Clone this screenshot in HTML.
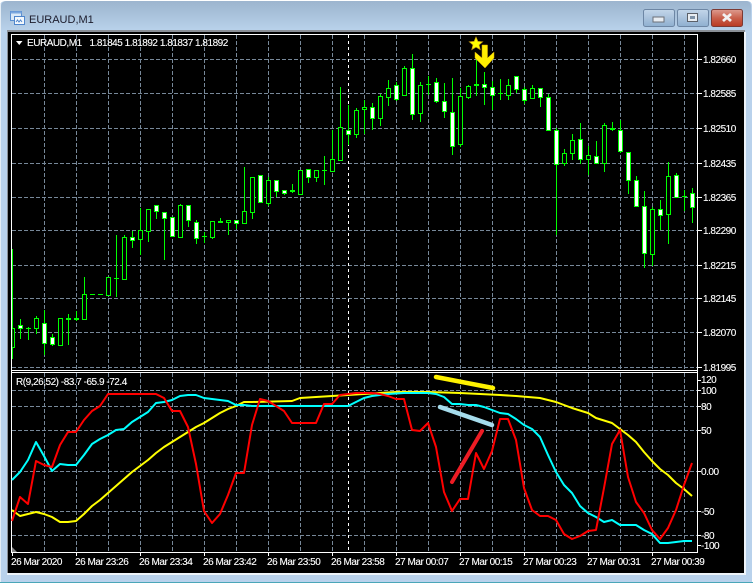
<!DOCTYPE html>
<html><head><meta charset="utf-8"><style>
html,body{margin:0;padding:0;background:#b9d2ec}
svg{display:block}
text{font-family:"Liberation Sans",sans-serif;font-size:10px;letter-spacing:-.47px;fill:#fff;stroke:#fff;stroke-width:.12px}
</style></head><body>
<svg width="753" height="583" viewBox="0 0 753 583" xmlns="http://www.w3.org/2000/svg">
<defs>
<linearGradient id="t" x1="0" y1="0" x2="0" y2="1"><stop offset="0" stop-color="#9cb4ce"/><stop offset="1" stop-color="#bad3ec"/></linearGradient>
<linearGradient id="b" x1="0" y1="0" x2="0" y2="1"><stop offset="0" stop-color="#c3d6ea"/><stop offset=".5" stop-color="#a9c2dc"/><stop offset="1" stop-color="#8fb0d0"/></linearGradient>
<linearGradient id="r" x1="0" y1="0" x2="0" y2="1"><stop offset="0" stop-color="#dd9c90"/><stop offset=".5" stop-color="#c9604c"/><stop offset="1" stop-color="#b93a22"/></linearGradient>
</defs>
<rect width="753" height="583" fill="#fff"/>
<path d="M0 583V6Q0 1 6 1H747Q752 1 752 6V583Z" fill="#b9d2ec"/>
<path d="M1 32V7Q1 1 7 1H746Q751 1 751 7V32Z" fill="url(#t)"/>
<rect x="0" y="582" width="753" height="1" fill="#4aa6b8"/>
<rect x="0" y="3" width="1" height="579" fill="#e4edf5"/>
<rect x="7" y="30" width="738" height="2" fill="#8a8f96"/>
<rect x="7" y="32" width="1" height="541" fill="#8a8f96"/>
<rect x="744" y="32" width="2" height="543" fill="#eef4fa"/>
<rect x="7" y="573" width="739" height="2" fill="#eef4fa"/>
<rect x="8" y="32" width="736" height="541" fill="#000"/>

<!-- title icon -->
<rect x="10.500" y="11.500" width="11" height="9" fill="#dbe9f7" stroke="#5b8fd0"/>
<rect x="10.500" y="11.500" width="11" height="2" fill="#7aa6de"/>
<rect x="14.500" y="16.500" width="10" height="8" fill="#f3f8fd" stroke="#4f86cc"/>
<path d="M16 22l1.500-2 1.500 2 1.500-2 1.500 2" fill="none" stroke="#4f86cc"/>
<text x="29" y="23" style="font-size:11px;letter-spacing:0;fill:#1c1c2c;stroke:none">EURAUD,M1</text>

<!-- window buttons -->
<rect x="643.500" y="9.500" width="31" height="17" rx="2" fill="url(#b)" stroke="#6d86a4"/>
<rect x="653" y="17" width="11" height="5" fill="#e8edf2" stroke="#6b7078"/>
<rect x="677.500" y="9.500" width="31" height="17" rx="2" fill="url(#b)" stroke="#6d86a4"/>
<rect x="687.500" y="13.500" width="10" height="8" fill="#e8edf2" stroke="#5b6068"/>
<rect x="690" y="16" width="5" height="3" fill="#7f93a8"/>
<rect x="711.500" y="9.500" width="31" height="17" rx="2" fill="url(#r)" stroke="#7c3a34"/>
<path d="M723 14l8 7m0-7l-8 7" stroke="#f2f2f2" stroke-width="2.800" fill="none"/>

<!-- grid -->
<path shape-rendering="crispEdges" fill="none" stroke="#778899" stroke-dasharray="4 2" d="M12 59.500H697M12 93.500H697M12 128.500H697M12 163.500H697M12 197.500H697M12 230.500H697M12 265.500H697M12 298.500H697M12 332.500H697M12 367.500H697M12 390.500H697M12 406.500H697M12 430.500H697M12 471.500H697M12 511.500H697M12 535.500H697"/>
<path shape-rendering="crispEdges" fill="none" stroke="#778899" stroke-dasharray="4 2" d="M44.500 35V370M76.500 35V370M108.500 35V370M140.500 35V370M172.500 35V370M204.500 35V370M236.500 35V370M268.500 35V370M300.500 35V370M332.500 35V370M364.500 35V370M396.500 35V370M428.500 35V370M460.500 35V370M492.500 35V370M524.500 35V370M556.500 35V370M588.500 35V370M620.500 35V370M652.500 35V370M684.500 35V370M44.500 373V552M76.500 373V552M108.500 373V552M140.500 373V552M172.500 373V552M204.500 373V552M236.500 373V552M268.500 373V552M300.500 373V552M332.500 373V552M364.500 373V552M396.500 373V552M428.500 373V552M460.500 373V552M492.500 373V552M524.500 373V552M556.500 373V552M588.500 373V552M620.500 373V552M652.500 373V552M684.500 373V552"/>
<path shape-rendering="crispEdges" fill="none" stroke="#fff" stroke-dasharray="3 3" d="M348.500 35V370M348.500 373V552"/>

<!-- frames -->
<path shape-rendering="crispEdges" fill="none" stroke="#fff" d="M11.500 34.500H697.500V552.500H11.500ZM11.500 370.500H697.500M11.500 372.500H697.500"/>
<path shape-rendering="crispEdges" fill="none" stroke="#fff" d="M698 59.500h4M698 93.500h4M698 128.500h4M698 163.500h4M698 197.500h4M698 230.500h4M698 265.500h4M698 298.500h4M698 332.500h4M698 367.500h4M698 380.500h3M698 390.500h3M698 406.500h3M698 430.500h3M698 471.500h3M698 511.500h3M698 535.500h3M698 545.500h3M12.500 553v3M76.500 553v3M140.500 553v3M204.500 553v3M268.500 553v3M332.500 553v3M396.500 553v3M460.500 553v3M524.500 553v3M588.500 553v3M652.500 553v3"/>

<!-- candle wicks -->
<path shape-rendering="crispEdges" fill="none" stroke="#00ff00" d="M12.500 249V359M20.500 319V339M28.500 327V340M36.500 316V334M44.500 310V355M52.500 334V346M68.500 314V345M76.500 311V321M84.500 277V320M116.500 235V297M124.500 235V280M132.500 231V248M140.500 208V255M148.500 209V242M156.500 205V219M164.500 212V260M180.500 204V238M188.500 205V227M196.500 220V244M204.500 232V243M212.500 221V239M220.500 218V223M228.500 220V235M236.500 220V229M244.500 167V224M252.500 177V219M268.500 177V206M276.500 180V197M284.500 190V195M292.500 184V193M308.500 169V183M316.500 170V182M324.500 156V185M332.500 130V172M340.500 87V161M348.500 105V145M356.500 108V138M364.500 100V134M372.500 103V130M380.500 94V126M388.500 80V106M396.500 82V101M404.500 66V96M412.500 54V120M420.500 82V122M428.500 76V95M436.500 78V103M444.500 83V118M452.500 78V155M460.500 88V147M468.500 85V99M476.500 60V96M484.500 72V105M492.500 81V110M500.500 79V100M508.500 79V100M516.500 76V93M524.500 87V104M532.500 85V99M540.500 88V107M548.500 94V131M556.500 128V235M564.500 149V166M572.500 134V160M580.500 123V164M588.500 146V175M596.500 141V164M604.500 123V172M612.500 122V131M620.500 120V153M628.500 152V194M636.500 176V207M644.500 191V268M652.500 207V266M660.500 200V230M668.500 162V244M676.500 173V198M684.500 190V211M692.500 188V223"/>
<!-- doji bars -->
<path shape-rendering="crispEdges" fill="none" stroke="#00ff00" d="M26 328.500h5M66 319.500h5M66 318.500h5M74 319.500h5M74 318.500h5M90 294.500h5M98 294.500h5M114 278.500h5M202 236.500h5M218 222.500h5M218 221.500h5M290 191.500h5M290 190.500h5M322 170.500h5M426 84.500h5M474 85.500h5M474 84.500h5M498 93.500h5M610 129.500h5M610 128.500h5M682 196.500h5"/>
<!-- hollow bodies -->
<path shape-rendering="crispEdges" fill="#000" stroke="#00ff00" d="M12.500 328.500h2V347.500h-2M34.500 318.500h4V328.500h-4zM58.500 318.500h4V345.500h-4zM82.500 294.500h4V319.500h-4zM106.500 277.500h4V295.500h-4zM122.500 237.500h4V279.500h-4zM138.500 230.500h4V239.500h-4zM146.500 209.500h4V231.500h-4zM178.500 205.500h4V237.500h-4zM210.500 221.500h4V237.500h-4zM226.500 220.500h4V222.500h-4zM242.500 211.500h4V223.500h-4zM250.500 177.500h4V212.500h-4zM266.500 180.500h4V203.500h-4zM298.500 170.500h4V194.500h-4zM314.500 170.500h4V177.500h-4zM330.500 159.500h4V171.500h-4zM338.500 127.500h4V160.500h-4zM354.500 110.500h4V134.500h-4zM362.500 107.500h4V109.500h-4zM378.500 96.500h4V118.500h-4zM386.500 88.500h4V97.500h-4zM402.500 68.500h4V95.500h-4zM418.500 85.500h4V113.500h-4zM458.500 96.500h4V144.500h-4zM466.500 86.500h4V97.500h-4zM506.500 85.500h4V95.500h-4zM530.500 88.500h4V98.500h-4zM562.500 153.500h4V163.500h-4zM570.500 140.500h4V153.500h-4zM586.500 155.500h4V159.500h-4zM602.500 125.500h4V163.500h-4zM650.500 209.500h4V254.500h-4zM666.500 176.500h4V214.500h-4z"/>
<!-- white bodies -->
<path shape-rendering="crispEdges" fill="#fff" stroke="#00ff00" d="M18.500 325.500h4V328.500h-4zM42.500 323.500h4V343.500h-4zM50.500 337.500h4V344.500h-4zM130.500 237.500h4V240.500h-4zM154.500 205.500h4V211.500h-4zM162.500 212.500h4V218.500h-4zM170.500 217.500h4V236.500h-4zM186.500 205.500h4V220.500h-4zM194.500 222.500h4V238.500h-4zM234.500 220.500h4V223.500h-4zM258.500 175.500h4V202.500h-4zM274.500 180.500h4V191.500h-4zM282.500 190.500h4V193.500h-4zM306.500 169.500h4V177.500h-4zM346.500 130.500h4V134.500h-4zM370.500 107.500h4V118.500h-4zM394.500 85.500h4V99.500h-4zM410.500 68.500h4V114.500h-4zM434.500 82.500h4V101.500h-4zM442.500 101.500h4V111.500h-4zM450.500 112.500h4V146.500h-4zM482.500 84.500h4V87.500h-4zM490.500 87.500h4V95.500h-4zM514.500 76.500h4V89.500h-4zM522.500 89.500h4V100.500h-4zM538.500 88.500h4V97.500h-4zM546.500 97.500h4V130.500h-4zM554.500 130.500h4V164.500h-4zM578.500 139.500h4V159.500h-4zM594.500 156.500h4V163.500h-4zM618.500 130.500h4V151.500h-4zM626.500 152.500h4V180.500h-4zM634.500 180.500h4V206.500h-4zM642.500 206.500h4V253.500h-4zM658.500 209.500h4V215.500h-4zM674.500 175.500h4V197.500h-4zM690.500 193.500h4V207.500h-4z"/>

<!-- star + arrow -->
<path d="M476 37l1.900 4.400 4.800.400-3.600 3.100 1.100 4.700-4.200-2.500-4.200 2.500 1.100-4.700-3.600-3.100 4.800-.400z" fill="#ffff00" stroke="#c89a10" stroke-width=".7"/>
<path d="M482 45h5.500V58L494 52V58L485 68 475 58V52L482 58Z" fill="#ffee00" stroke="#d8a800" stroke-width=".5"/>

<!-- indicator lines -->
<g fill="none" stroke-width="2" stroke-linejoin="round">
<polyline stroke="#ffff00" points="12,510 20,516 28,514 36,512 44,514 52,517 60,522 68,522 76,521 84,514 92,506 100,500 108,493 116,486 124,479 132,472 140,466 148,460 156,453 164,447 172,442 180,437 188,432 196,427 204,423 212,418 220,413 228,409 236,406 244,402 252,402 292,401 300,398 316,397 332,396 348,395 380,393 396,392 428,392 460,393 500,395 516,396 540,398 556,402 572,408 588,413 596,418 612,423 620,429 628,435 636,442 644,452 652,461 660,469 668,475 676,483 684,489 692,496"/>
<polyline stroke="#00ffff" points="12,480 20,472 28,460 36,442 44,456 52,471 60,464 68,465 76,465 84,455 92,444 100,439 108,435 116,430 124,429 132,422 140,417 148,412 156,403 164,402 172,400 180,396 188,395 196,395 204,398 212,399 220,400 228,401 236,405 244,405 252,406 340,406 348,406 356,402 364,398 372,396 380,395 388,394 404,393 428,393 436,394 444,397 452,404 460,404 468,405 476,405 484,407 492,410 500,413 508,414 516,419 524,425 532,429 540,437 548,455 556,472 564,485 572,493 580,506 588,513 596,517 604,522 612,520 620,525 628,525 636,525 644,530 652,534 660,543 668,543 676,542 684,541 692,541"/>
<polyline stroke="#ff0000" points="12,521 20,497 28,504 36,461 44,465 52,467 60,445 68,432 76,432 84,420 92,411 100,406 108,394 156,394 164,398 172,411 180,411 188,427 196,464 204,511 212,523 220,514 228,495 236,473 244,473 252,425 260,399 268,401 276,406 284,411 292,423 316,423 324,404 332,404 340,395 348,394 356,393 364,393 372,393 380,394 388,396 396,399 404,399 412,430 420,431 428,423 436,447 444,492 452,511 460,499 468,499 476,453 484,469 492,451 500,419 508,419 516,440 524,488 532,510 540,516 548,516 556,520 564,534 572,539 580,536 588,531 596,530 604,488 612,444 620,430 628,477 636,502 644,513 652,530 660,539 668,528 676,510 684,485 692,463"/>
</g>
<path d="M436 377L493 388" stroke="#fff200" stroke-width="4.500" stroke-linecap="round"/>
<path d="M440 407L492 425" stroke="#a6dcec" stroke-width="4.500" stroke-linecap="round"/>
<path d="M452 482L482 431" stroke="#ed1c24" stroke-width="4" stroke-linecap="round"/>
<path d="M12 547L17 552H12Z" fill="#888"/>
<path d="M16 41h6.500l-3.250 4z" fill="#fff"/>

<!-- text -->
<text x="27" y="46">EURAUD,M1</text>
<text x="89.500" y="46">1.81845 1.81892 1.81837 1.81892</text>
<text x="16" y="385">R(9,26,52) -83.7 -65.9 -72.4</text>
<text x="703" y="63">1.82660</text>
<text x="703" y="97">1.82585</text>
<text x="703" y="132">1.82510</text>
<text x="703" y="167">1.82435</text>
<text x="703" y="201">1.82365</text>
<text x="703" y="234">1.82290</text>
<text x="703" y="269">1.82215</text>
<text x="703" y="302">1.82145</text>
<text x="703" y="336">1.82070</text>
<text x="703" y="371">1.81995</text>
<text x="701" y="383">120</text>
<text x="701" y="394">100</text>
<text x="701" y="410">80</text>
<text x="701" y="434">50</text>
<text x="701" y="475">0.00</text>
<text x="701" y="515">-50</text>
<text x="701" y="539">-80</text>
<text x="701" y="549">-100</text>
<text x="11" y="565">26 Mar 2020</text>
<text x="75" y="565">26 Mar 23:26</text>
<text x="139" y="565">26 Mar 23:34</text>
<text x="203" y="565">26 Mar 23:42</text>
<text x="267" y="565">26 Mar 23:50</text>
<text x="331" y="565">26 Mar 23:58</text>
<text x="395" y="565">27 Mar 00:07</text>
<text x="459" y="565">27 Mar 00:15</text>
<text x="523" y="565">27 Mar 00:23</text>
<text x="587" y="565">27 Mar 00:31</text>
<text x="651" y="565">27 Mar 00:39</text>
</svg>
</body></html>
